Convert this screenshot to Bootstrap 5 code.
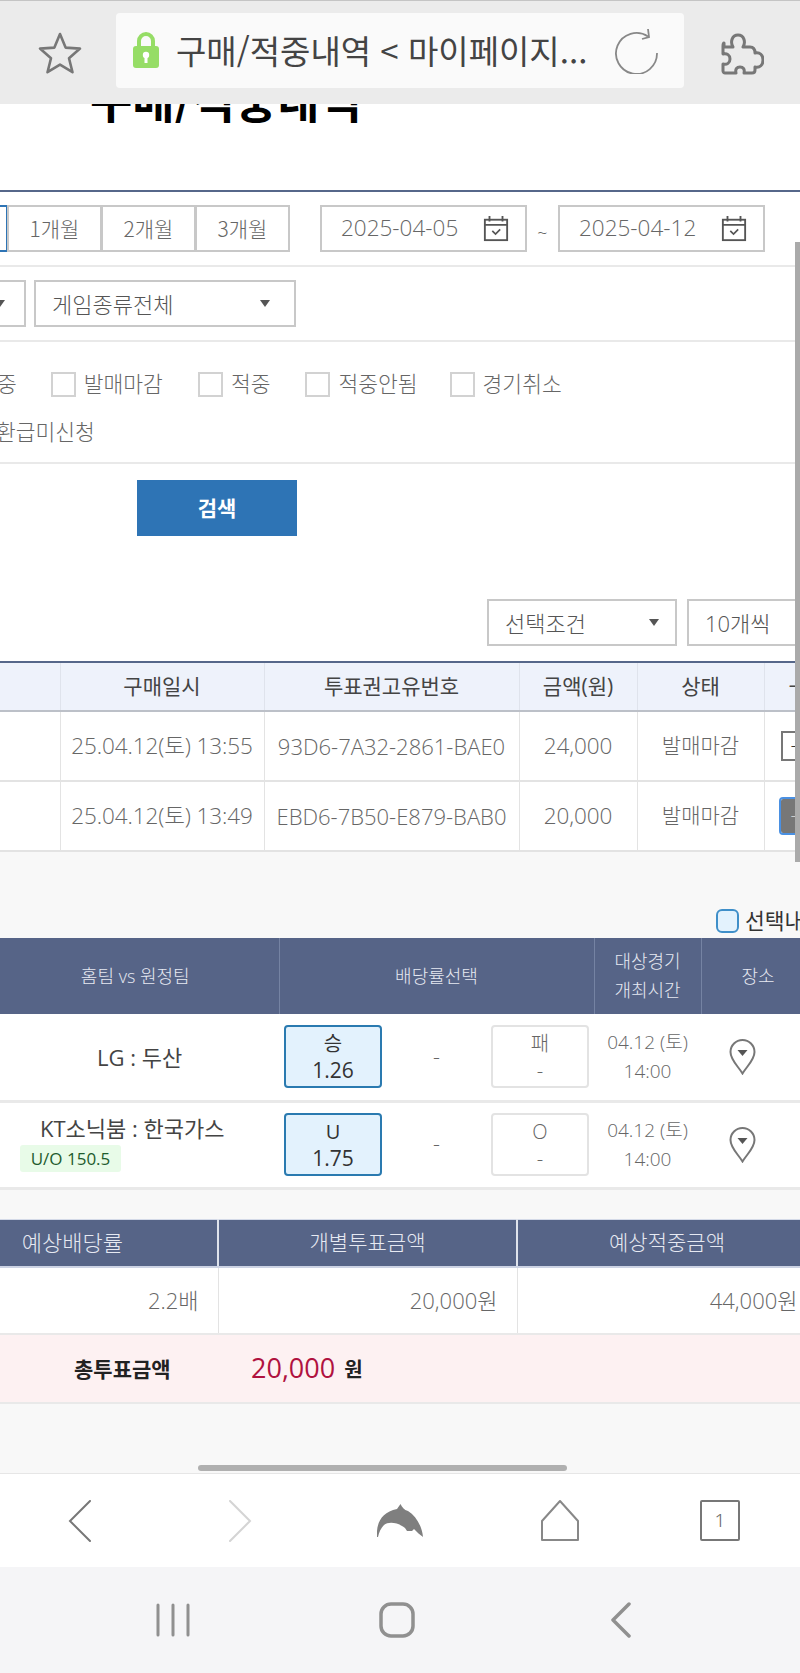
<!DOCTYPE html>
<html lang="ko">
<head>
    <meta charset="UTF-8">
    <meta name="viewport" content="width=device-width, initial-scale=1.0">
    <title>구매/적중내역</title>
    <link href="https://cdn.jsdelivr.net/npm/bootstrap@5.3.0/dist/css/bootstrap.min.css" rel="stylesheet">
    <style>
        html, body { height: 1673px; overflow: hidden; }
        body { width: 800px; font-family: "Open Sans", "Noto Sans CJK KR", sans-serif; font-weight: 300; font-size: 21.5px; color: #666; background: #f8f8f8; }

        /* browser chrome */
        .top-bar { height: 104px; background: #ebebeb; border-top: 1px solid #c4c4c4; position: relative; z-index: 2; }
        .star-slot { width: 116px; padding-left: 4px; }
        .puzzle-slot { width: 116px; }
        .url-box { width: 568px; height: 75px; margin-top: 12px; background: #fafafa; border-radius: 4px; padding: 0 25px 0 16px; color: #444; font-size: 33px; font-weight: 400; line-height: 1; white-space: nowrap; }
        .url-text { font-family: "Noto Sans CJK KR", sans-serif; margin-left: 16px; }

        .page-area { height: 1369px; position: relative; overflow: hidden; }
        .title-wrap { height: 86px; background: #fff; padding-left: 90px; display: flow-root; }
        .title-wrap h2 { font-family: "Noto Sans CJK KR", sans-serif; font-size: 46px; font-weight: 700; color: #000; line-height: 46px; margin: -29px 0 0; }

        /* search filter */
        .filter-box { background: #fff; border-top: 2px solid #56678a; }
        .filter-row { border-bottom: 2px solid #e9e9e9; }
        .row-period { height: 75px; padding-top: 13px; }
        .row-select { height: 75px; padding-top: 13px; }
        .row-check { height: 122px; padding-top: 18px; }
        .box-field { height: 47px; border: 2px solid #c8c8c8; color: #666; font-size: 20px; line-height: 1; background: #fff; }
        .period-cut { width: 8px; height: 47px; border: 2px solid #2e74b5; border-left: 0; }
        .period-btn { width: 95px; margin-left: -1px; font-family: "Noto Sans CJK KR", sans-serif; font-size: 21px; }
        .date-field { width: 207px; padding: 0 16px 0 19px; font-size: 22.5px; }
        .date-first { margin-left: 30px; }
        .tilde { width: 31px; text-align: center; font-size: 18px; margin-bottom: 6px; }
        .select-cut { width: 26px; }
        .select-game { width: 262px; margin-left: 8px; padding: 0 24px 0 16px; color: #555; font-size: 22px; }
        .select-cond { width: 190px; padding: 0 16px 0 16px; color: #555; font-size: 22px; flex-shrink: 0; }
        .select-count { width: 130px; margin-left: 10px; padding: 0 16px; color: #555; flex-shrink: 0; font-size: 22px; }
        .caret { width: 0; height: 0; border-left: 5px solid transparent; border-right: 5px solid transparent; border-top: 7px solid #555; }
        .caret-cut { margin-left: -5px; }
        .check-line { height: 48px; white-space: nowrap; }
        .fake-check { width: 25px; height: 25px; border: 2px solid #d2d2d2; background: #fff; margin-right: 8px; flex-shrink: 0; }
        .check-item { margin-right: 35px; color: #666; }
        .check-cut { margin-left: -3px; margin-right: 34px; }
        .check-tight { margin-right: 32px; }
        .refund-label { margin-left: -4px; }
        .search-wrap { height: 135px; padding: 16px 0 0 137px; }
        .btn.search-btn { width: 160px; height: 56px; background: #2e74b5; border: 0; border-radius: 0; color: #fff; font-size: 21px; font-weight: 700; font-family: "Noto Sans CJK KR", sans-serif; }
        .list-tools { height: 62px; padding-left: 487px; overflow: hidden; }

        /* purchase list */
        .table-clip { overflow: hidden; }
        .table.buy-table { width: 824px; table-layout: fixed; margin: 0; border-top: 2px solid #56678a; color: #666; }
        .buy-table th, .buy-table td { padding: 0; text-align: center; vertical-align: middle; border: 0; border-right: 1px solid #e3e3e3; border-bottom: 2px solid #e3e3e3; font-weight: 300; white-space: nowrap; color: #666; font-size: 21px; background: #fff; }
        .buy-table th { height: 49px; background: #eef2fb; color: #444; font-weight: 400; border-bottom-color: #bcc0c8; border-right-color: #dfe3ec; }
        .buy-table td { height: 70px; }
        .buy-table td.num-cell { font-size: 22.5px; letter-spacing: -0.1px; }
        .buy-table td.id-cell { font-size: 22px; }
        .toggle-plus, .toggle-minus { display: block; width: 32px; height: 30px; margin-left: 16px; border: 2px solid #777; color: #333; line-height: 25px; text-align: center; font-size: 22px; }
        .toggle-minus { background: #777; color: #ccc; outline: 2px solid #4a90e2; outline-offset: 0; border-radius: 2px; height: 34px; line-height: 28px; }

        .select-view { height: 86px; padding: 51px 0 0 716px; white-space: nowrap; color: #333; font-weight: 400; line-height: 24px; }
        .round-check { width: 23px; height: 24px; border: 2px solid #3f8fc9; border-radius: 6px; background: #e3f2fd; margin-right: 6px; flex-shrink: 0; }

        /* match list */
        .table.match-table { width: 815px; table-layout: fixed; margin: 0; }
        .match-table th { height: 76px; background: #566487; color: #e6e9f2; font-weight: 300; font-size: 18px; line-height: 29px; text-align: center; vertical-align: middle; padding: 0; border: 0; border-right: 1px solid #7583a3; }
        .match-table td { height: 87px; background: #fff; padding: 0; vertical-align: middle; border: 0; border-bottom: 3px solid #e9e9e9; color: #666; }
        .team-cell { padding-left: 20px !important; }
        .team-name { font-size: 22px; font-weight: 400; color: #444; line-height: 26px; white-space: nowrap; }
        .team-lg { margin-left: 77px; }
        .team-kt { margin-left: 20px; }
        .uo-tag { display: inline-block; width: 101px; height: 27px; background: #e8fbe8; color: #1f5c2e; font-size: 17px; font-weight: 400; line-height: 27px; text-align: center; border-radius: 3px; margin-top: 2px; }
        .odds-cell { padding: 0 5px !important; }
        .odds-btn { width: 98px; height: 63px; border: 2px solid #e3e3e3; border-radius: 4px; background: #fff; text-align: center; font-size: 20px; line-height: 27px; padding-top: 3px; color: #666; }
        .odds-on { background: #e3f2fd; border-color: #2a7ab0; color: #333; font-weight: 400; }
        .odds-on .odds-val { font-size: 21px; }
        .time-cell { text-align: center; font-size: 19px; line-height: 29px; }
        .pin-cell { padding-left: 28px !important; }

        /* amount summary */
        .gap-strip { height: 29px; }
        .table.sum-table { width: 817px; table-layout: fixed; margin: 0; }
        .sum-table th { height: 48px; background: #566487; color: #e6e9f2; font-weight: 300; font-size: 21px; text-align: center; vertical-align: middle; padding: 0; border: 0; border-top: 1px solid #d4dae8; border-right: 2px solid #dfe3ec; border-bottom: 2px solid #ccd3e4; }
        .sum-table th.rate-head { font-size: 22px; }
        .sum-table td { height: 67px; background: #fff; text-align: right; padding: 0 19px 0 0; vertical-align: middle; border: 0; border-right: 1px solid #e3e3e3; border-bottom: 2px solid #e9e9e9; color: #666; font-size: 22px; }
        .total-row { height: 69px; background: #fdf1f2; border-bottom: 2px solid #e9e9e9; padding-left: 74px; }
        .total-label { width: 177px; font-weight: 700; color: #222; font-size: 21px; font-family: "Noto Sans CJK KR", sans-serif; }
        .total-num { color: #b0123f; font-size: 27px; font-weight: 400; margin-right: 9px; }
        .total-won { font-weight: 700; color: #222; font-size: 20px; font-family: "Noto Sans CJK KR", sans-serif; }

        /* overlay scrollbars */
        .scroll-v { position: absolute; right: 0; top: 138px; width: 5px; height: 620px; background: #aaa; }
        .scroll-h { position: absolute; left: 198px; bottom: 2px; width: 369px; height: 6px; border-radius: 3px; background: #b0b0b0; }

        /* bottom bars */
        .tool-bar { height: 94px; background: #fff; border-top: 1px solid #e6e6e6; }
        .tool-cell { width: 160px; }
        .sys-bar { height: 106px; background: #f5f5f7; padding-right: 6px; }
        .sys-cell { width: 224px; }
    </style>
</head>
<body>
    <div class="top-bar d-flex">
        <div class="star-slot d-flex justify-content-center align-items-center">
            <svg width="44" height="44" viewBox="0 0 44 44" fill="none" stroke="#777" stroke-width="2.6" stroke-linejoin="round"><path d="M22 3l5.6 13.6 14.4 1-11 9.6 3.5 14-12.5-7.6-12.5 7.6 3.5-14-11-9.6 14.400-1z"/></svg>
        </div>
        <div class="url-box d-flex align-items-center">
            <svg width="28" height="37" viewBox="0 0 28 37"><path d="M7 16V9a7 7 0 0 1 14 0v7" fill="none" stroke="#96dd66" stroke-width="4"/><rect x="1" y="14" width="26" height="22" rx="3" fill="#96dd66"/><circle cx="14" cy="23" r="3.200" fill="#fff"/><rect x="12.500" y="24" width="3" height="7" fill="#fff"/></svg>
            <span class="url-text">구매/적중내역 &lt; 마이페이지...</span>
            <svg class="ms-auto" width="44" height="46" viewBox="0 0 44 46" fill="none" stroke="#888" stroke-width="1.800"><path d="M33 8.500A20.500 20.500 0 1 0 42 25"/><path d="M27 11l7-2-1-8"/></svg>
        </div>
        <div class="puzzle-slot d-flex justify-content-center align-items-center">
            <svg width="44" height="44" viewBox="0 0 44 44" fill="none" stroke="#777" stroke-width="3" stroke-linejoin="round"><path d="M4 16h9c-3-5-1-12 5-12s8 7 5 12h7c4 0 5 3 5 6 5-1 8 2 8 7s-3 8-8 7v3c0 2-1 3-3 3h-8c1-4-1-6-4-6s-5 2-4 6H5c-1 0-2-1-2-2v-7c4 1 7-1 7-5s-3-6-7-5v-8c0-2 0-3 1-3z"/></svg>
        </div>
    </div>

    <div class="page-area">
        <div class="title-wrap"><h2>구매/적중내역</h2></div>

        <div class="filter-box">
            <div class="filter-row row-period d-flex">
                <div class="period-cut"></div>
                <div class="box-field period-btn d-flex justify-content-center align-items-center">1개월</div>
                <div class="box-field period-btn d-flex justify-content-center align-items-center">2개월</div>
                <div class="box-field period-btn d-flex justify-content-center align-items-center">3개월</div>
                <div class="box-field date-field date-first d-flex justify-content-between align-items-center">
                    <span>2025-04-05</span>
                    <svg width="26" height="26" viewBox="0 0 26 28" fill="none" stroke="#555" stroke-width="2"><rect x="1" y="4" width="24" height="22"/><path d="M1 9.500h24M6 0v6M20 0v6"/><path d="M9 16l3.500 3.500 5-5" stroke-width="1.800"/></svg>
                </div>
                <div class="tilde align-self-center">~</div>
                <div class="box-field date-field d-flex justify-content-between align-items-center">
                    <span>2025-04-12</span>
                    <svg width="26" height="26" viewBox="0 0 26 28" fill="none" stroke="#555" stroke-width="2"><rect x="1" y="4" width="24" height="22"/><path d="M1 9.500h24M6 0v6M20 0v6"/><path d="M9 16l3.500 3.500 5-5" stroke-width="1.800"/></svg>
                </div>
            </div>
            <div class="filter-row row-select d-flex">
                <div class="box-field select-cut border-start-0 d-flex align-items-center"><span class="caret caret-cut"></span></div>
                <div class="box-field select-game d-flex justify-content-between align-items-center">
                    <span>게임종류전체</span><span class="caret"></span>
                </div>
            </div>
            <div class="filter-row row-check">
                <div class="check-line d-flex align-items-center">
                    <span class="check-item check-cut">중</span>
                    <span class="fake-check"></span><span class="check-item">발매마감</span>
                    <span class="fake-check"></span><span class="check-item">적중</span>
                    <span class="fake-check"></span><span class="check-item check-tight">적중안됨</span>
                    <span class="fake-check"></span><span class="check-item">경기취소</span>
                </div>
                <div class="check-line d-flex align-items-center"><span class="refund-label">환급미신청</span></div>
            </div>
            <div class="search-wrap">
                <button type="button" class="btn search-btn">검색</button>
            </div>
            <div class="list-tools d-flex">
                <div class="box-field select-cond d-flex justify-content-between align-items-center">
                    <span>선택조건</span><span class="caret"></span>
                </div>
                <div class="box-field select-count d-flex align-items-center">10개씩</div>
            </div>
        </div>

        <div class="table-clip">
            <table class="table buy-table">
                <colgroup><col style="width:60px"><col style="width:204px"><col style="width:255px"><col style="width:118px"><col style="width:127px"><col style="width:60px"></colgroup>
                <thead>
                    <tr><th></th><th>구매일시</th><th>투표권고유번호</th><th>금액(원)</th><th>상태</th><th class="text-start ps-4">ㅡ</th></tr>
                </thead>
                <tbody>
                    <tr><td></td><td class="num-cell">25.04.12(토) 13:55</td><td class="id-cell">93D6-7A32-2861-BAE0</td><td class="num-cell">24,000</td><td>발매마감</td><td><span class="toggle-plus">+</span></td></tr>
                    <tr><td></td><td class="num-cell">25.04.12(토) 13:49</td><td class="id-cell">EBD6-7B50-E879-BAB0</td><td class="num-cell">20,000</td><td>발매마감</td><td><span class="toggle-minus">−</span></td></tr>
                </tbody>
            </table>
        </div>

        <div class="select-view d-flex align-items-center">
            <span class="round-check"></span><span>선택내역</span>
        </div>

        <div class="table-clip">
            <table class="table match-table">
                <colgroup><col style="width:279px"><col style="width:315px"><col style="width:107px"><col style="width:114px"></colgroup>
                <thead>
                    <tr><th class="pe-2">홈팀 vs 원정팀</th><th>배당률선택</th><th>대상경기<br>개최시간</th><th>장소</th></tr>
                </thead>
                <tbody>
                    <tr>
                        <td class="team-cell"><div class="team-name team-lg">LG : 두산</div></td>
                        <td class="odds-cell">
                            <div class="d-flex justify-content-between align-items-center">
                                <div class="odds-btn odds-on">승<div class="odds-val">1.26</div></div>
                                <span>-</span>
                                <div class="odds-btn">패<div>-</div></div>
                            </div>
                        </td>
                        <td class="time-cell">04.12 (토)<br>14:00</td>
                        <td class="pin-cell">
                            <svg width="27" height="36" viewBox="0 0 27 36" fill="none" stroke="#777" stroke-width="2"><path d="M13.500 34.500C9 27 1.500 21 1.500 13a12 12 0 0 1 24 0c0 8-7.500 14-12 21.500z"/><path d="M8.500 11h10l-5 6z" fill="#555" stroke="none"/></svg>
                        </td>
                    </tr>
                    <tr>
                        <td class="team-cell">
                            <div class="team-name team-kt">KT소닉붐 : 한국가스</div>
                            <span class="uo-tag">U/O 150.5</span>
                        </td>
                        <td class="odds-cell">
                            <div class="d-flex justify-content-between align-items-center">
                                <div class="odds-btn odds-on">U<div class="odds-val">1.75</div></div>
                                <span>-</span>
                                <div class="odds-btn">O<div>-</div></div>
                            </div>
                        </td>
                        <td class="time-cell">04.12 (토)<br>14:00</td>
                        <td class="pin-cell">
                            <svg width="27" height="36" viewBox="0 0 27 36" fill="none" stroke="#777" stroke-width="2"><path d="M13.500 34.500C9 27 1.500 21 1.500 13a12 12 0 0 1 24 0c0 8-7.500 14-12 21.500z"/><path d="M8.500 11h10l-5 6z" fill="#555" stroke="none"/></svg>
                        </td>
                    </tr>
                </tbody>
            </table>
        </div>

        <div class="gap-strip"></div>

        <div class="table-clip">
            <table class="table sum-table">
                <colgroup><col style="width:218px"><col style="width:299px"><col style="width:300px"></colgroup>
                <thead>
                    <tr><th class="rate-head text-start ps-3">&nbsp;예상배당률</th><th>개별투표금액</th><th>예상적중금액</th></tr>
                </thead>
                <tbody>
                    <tr><td>2.2배</td><td>20,000원</td><td>44,000원</td></tr>
                </tbody>
            </table>
        </div>
        <div class="total-row d-flex align-items-center">
            <span class="total-label">총투표금액</span>
            <span class="total-num">20,000</span>
            <span class="total-won">원</span>
        </div>

        <div class="scroll-v"></div>
        <div class="scroll-h"></div>
    </div>

    <div class="tool-bar d-flex">
        <div class="tool-cell d-flex justify-content-center align-items-center">
            <svg width="24" height="42" viewBox="0 0 24 42" fill="none" stroke="#777" stroke-width="2" stroke-linecap="round"><path d="M22 1L2 21l20 20"/></svg>
        </div>
        <div class="tool-cell d-flex justify-content-center align-items-center">
            <svg width="24" height="42" viewBox="0 0 24 42" fill="none" stroke="#d4d4d4" stroke-width="2" stroke-linecap="round"><path d="M2 1l20 20L2 41"/></svg>
        </div>
        <div class="tool-cell d-flex justify-content-center align-items-center">
            <svg width="46" height="34" viewBox="0 0 46 34"><path d="M0 33C-1 20 4 8 20 5L23.500 0C25 3 27 6 31 7C39 12 45 22 46 33C43 31 40 28 37 25L35 27L30 27L28 24C22 19 12 17 7 21C4 24 2 28 1 33Z" fill="#7f7f7f"/></svg>
        </div>
        <div class="tool-cell d-flex justify-content-center align-items-center">
            <svg width="40" height="42" viewBox="0 0 40 42" fill="none" stroke="#888" stroke-width="2" stroke-linejoin="round"><path d="M20 1L38 21v19H2V21z"/></svg>
        </div>
        <div class="tool-cell d-flex justify-content-center align-items-center">
            <svg width="40" height="41" viewBox="0 0 40 41"><rect x="1" y="1" width="38" height="39" fill="none" stroke="#777" stroke-width="2" rx="1"/><text x="20" y="27" text-anchor="middle" font-family="Noto Sans" font-size="19" font-weight="300" fill="#666">1</text></svg>
        </div>
    </div>

    <div class="sys-bar d-flex justify-content-center align-items-center">
        <div class="sys-cell d-flex justify-content-center">
            <svg width="34" height="34" viewBox="0 0 34 34" stroke="#909090" stroke-width="3" stroke-linecap="round"><path d="M2 2v30M17 2v30M32 2v30"/></svg>
        </div>
        <div class="sys-cell d-flex justify-content-center">
            <svg width="36" height="36" viewBox="0 0 36 36" fill="none" stroke="#909090" stroke-width="3.500"><rect x="2" y="2" width="32" height="32" rx="10"/></svg>
        </div>
        <div class="sys-cell d-flex justify-content-center">
            <svg width="22" height="36" viewBox="0 0 22 36" fill="none" stroke="#909090" stroke-width="3.500" stroke-linecap="round" stroke-linejoin="round"><path d="M19 2L3 18l16 16"/></svg>
        </div>
    </div>

    <script src="https://cdn.jsdelivr.net/npm/bootstrap@5.3.0/dist/js/bootstrap.bundle.min.js"></script>
</body>
</html>
